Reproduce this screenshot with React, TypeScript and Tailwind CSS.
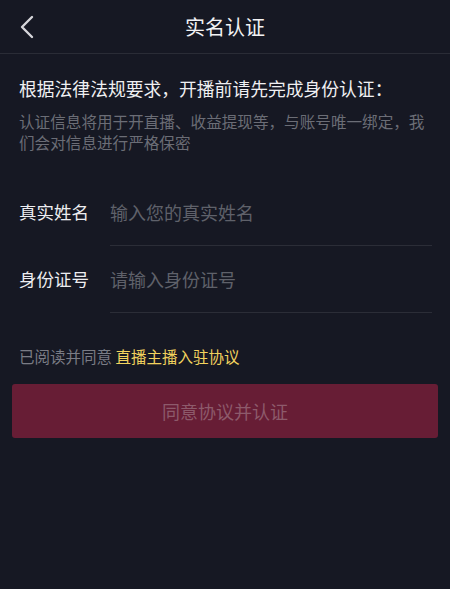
import React, { useState } from "react";

const font = "font-['Noto_Sans_CJK_SC','Noto_Sans',sans-serif]";

interface FieldProps {
  label: string;
  placeholder: string;
  value: string;
  onChange: (v: string) => void;
}

const Field: React.FC<FieldProps> = ({ label, placeholder, value, onChange }) => (
  <div className="flex h-[67px] items-stretch">
    <span className="w-[110px] shrink-0 pt-[21px] pl-[19px] text-[17.5px] leading-[24px] text-[#ededf0]">
      {label}
    </span>
    <div className="mr-[18px] flex-1 border-b border-[#2b2d37]">
      <input
        value={value}
        placeholder={placeholder}
        onChange={(e) => onChange(e.target.value)}
        className="mt-[21px] h-[24px] w-full bg-transparent text-[18px] leading-[24px] text-white outline-none placeholder:text-[#5f616a]"
      />
    </div>
  </div>
);

export default function App() {
  const [name, setName] = useState("");
  const [idNo, setIdNo] = useState("");

  return (
    <div className={`min-h-[589px] w-full bg-[#161823] ${font}`}>
      <header className="relative flex h-[54px] items-center justify-center border-b border-[#2a2c36]">
        <button className="absolute left-[18px] top-[15px] p-0">
          <svg width="18" height="24" viewBox="0 0 18 24" fill="none">
            <path
              d="M14 2 L4 12 L14 22"
              stroke="#d6d6da"
              strokeWidth="2.4"
              strokeLinecap="round"
              strokeLinejoin="round"
            />
          </svg>
        </button>
        <h1 className="text-[20px] font-normal text-[#f2f2f4]">实名认证</h1>
      </header>

      <div className="px-[19px] pt-[22px]">
        <p className="text-[17.8px] leading-[24px] font-normal text-[#f0f0f2]">
          根据法律法规要求，开播前请先完成身份认证：
        </p>
        <p className="mt-[11px] text-[15.6px] leading-[21px] text-[#6b6d76]">
          认证信息将用于开直播、收益提现等，与账号唯一绑定，我们会对信息进行严格保密
        </p>
      </div>

      <div className="mt-[26px]">
        <Field label="真实姓名" placeholder="输入您的真实姓名" value={name} onChange={setName} />
        <Field label="身份证号" placeholder="请输入身份证号" value={idNo} onChange={setIdNo} />
      </div>

      <p className="mt-[33px] px-[19px] text-[15.5px] leading-[20px] text-[#7a7c85]">
        已阅读并同意 <span className="text-[#f2d35e]">直播主播入驻协议</span>
      </p>

      <div className="mt-[18px] px-[12px]">
        <button className="h-[54px] w-full rounded-[3px] bg-[#671d35] text-[18px] text-[#8d5a6b]">
          同意协议并认证
        </button>
      </div>
    </div>
  );
}
